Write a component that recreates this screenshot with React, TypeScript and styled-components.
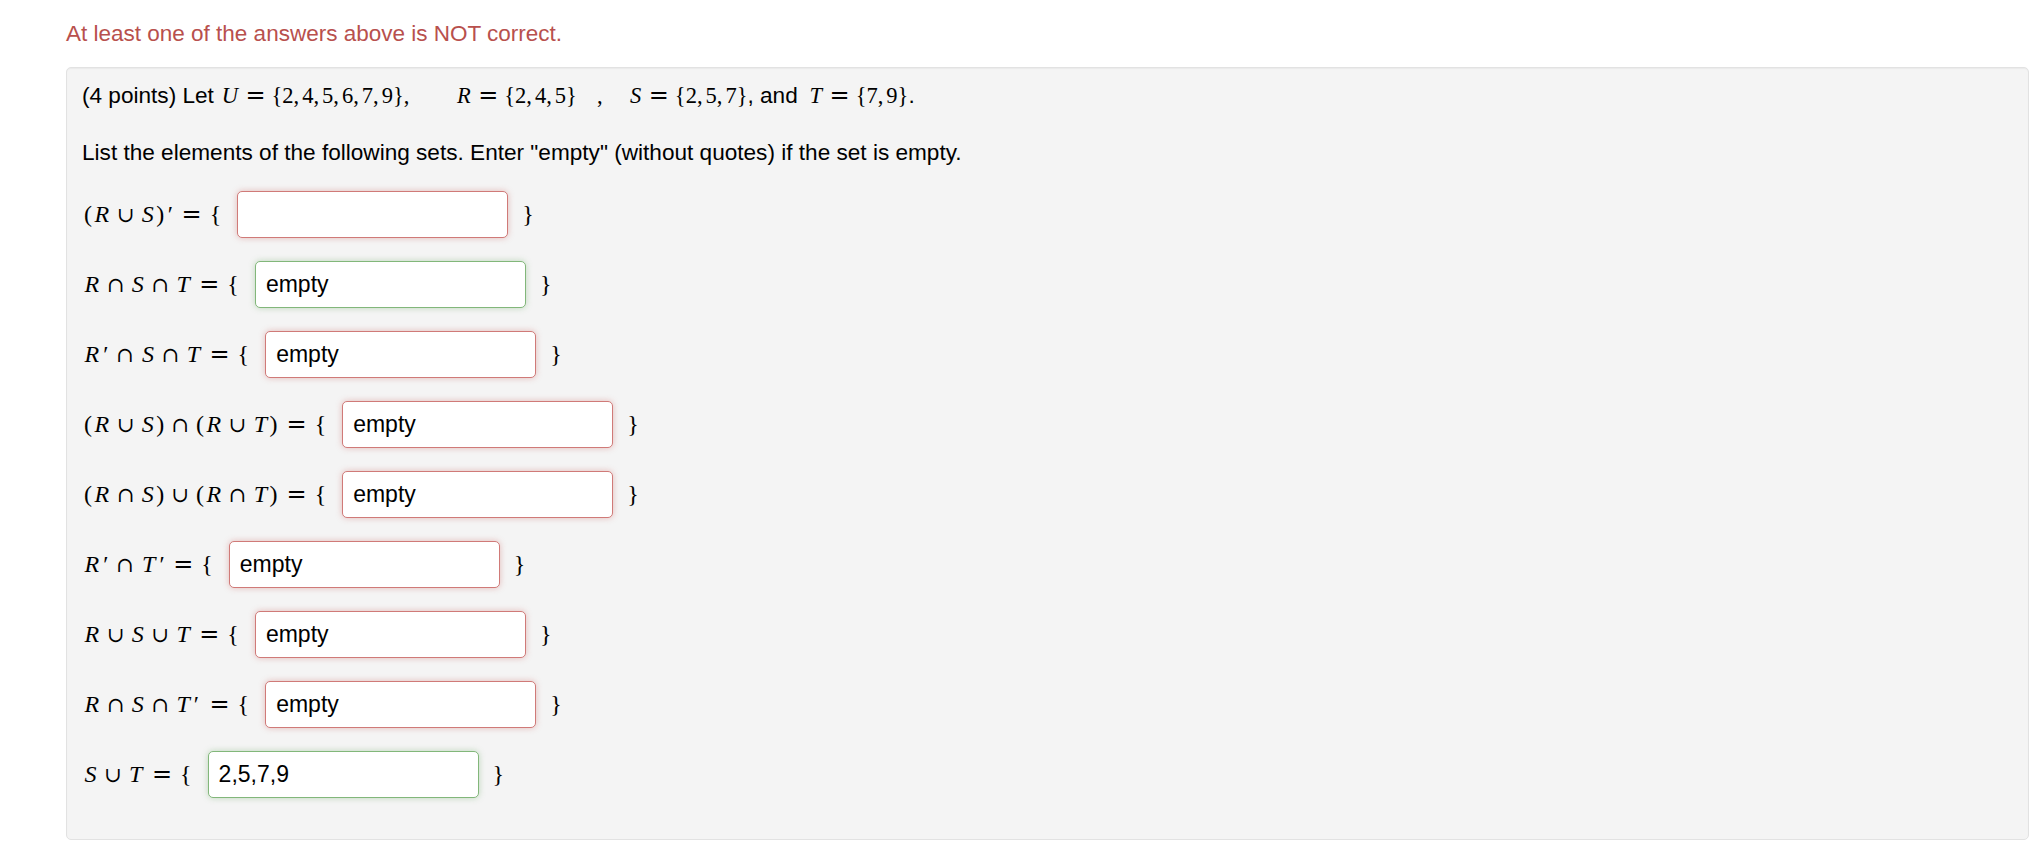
import React from "react";
import styled, { createGlobalStyle } from "styled-components";

const Global = createGlobalStyle`
  html, body { margin: 0; padding: 0; background: #ffffff; }
  body { font-family: "Liberation Sans", Arial, Helvetica, sans-serif; color: #000; }
`;

const Page = styled.div`
  padding: 15px 15px 0 66px;
  width: 2044px;
  box-sizing: border-box;
`;

const Warning = styled.div`
  font-size: 22.5px;
  line-height: 38px;
  color: #b8504d;
  margin-bottom: 14px;
`;

const Well = styled.div`
  box-sizing: border-box;
  width: 1963px;
  height: 773px;
  background: #f4f4f4;
  border: 1px solid #e2e2e2;
  border-radius: 5px;
  box-shadow: inset 0 1px 1px rgba(0, 0, 0, 0.04);
  padding: 7px 15px 0 15px;
  display: flex;
  flex-direction: column;
`;

const Para = styled.div<{ $mb: number }>`
  font-size: 22.6px;
  line-height: 40px;
  margin-bottom: ${(p) => p.$mb}px;
  display: flex;
  align-items: baseline;
  white-space: pre;
`;

const MathSpan = styled.span<{ $size?: number }>`
  font-family: "Liberation Serif", "DejaVu Serif", serif;
  font-size: ${(p) => p.$size ?? 24}px;
  white-space: pre;
`;

const V = styled.i`
  font-style: italic;
  font-family: "Liberation Serif", "DejaVu Serif", serif;
  padding: 0 1.5px;
`;

const Paren = styled.span`
  padding: 0 1px;
`;

const Op = styled.span<{ $m?: number }>`
  font-family: "DejaVu Serif", "Liberation Serif", serif;
  font-size: 21px;
  margin: 0 ${(p) => (p.$m ?? 6)}px;
`;

const Rel = styled.span<{ $m?: number }>`
  font-family: "DejaVu Sans", sans-serif;
  font-size: 24px;
  margin: 0 ${(p) => (p.$m ?? 8)}px;
`;

const Sep = styled.span`
  display: inline-block;
  margin-right: 3px;
`;

const Gap = styled.span<{ $w: number }>`
  display: inline-block;
  width: ${(p) => p.$w}px;
`;

const Prime = styled.span<{ $mr?: number }>`
  font-family: "Liberation Serif", "DejaVu Serif", serif;
  font-style: italic;
  font-size: 24px;
  margin: 0 ${(p) => p.$mr ?? 2}px 0 1px;
`;

const Rows = styled.div`
  display: flex;
  flex-direction: column;
  gap: 24px;
`;

const Row = styled.div`
  display: flex;
  align-items: center;
  height: 46px;
  padding-left: 1px;
`;

const Brace = styled.span<{ $l?: number; $r?: number }>`
  font-family: "Liberation Serif", "DejaVu Serif", serif;
  font-size: 24px;
  margin-left: ${(p) => p.$l ?? 0}px;
  margin-right: ${(p) => p.$r ?? 0}px;
`;

const Answer = styled.input<{ $ok: boolean }>`
  box-sizing: border-box;
  width: 271px;
  height: 47px;
  padding: 0 10px;
  border-radius: 5px;
  background: #fff;
  font-family: "Liberation Sans", Arial, Helvetica, sans-serif;
  font-size: 23px;
  color: #000;
  outline: none;
  border: 1px solid ${(p) => (p.$ok ? "#82b77a" : "#d07a78")};
  box-shadow: 0 0 6px ${(p) => (p.$ok ? "rgba(90, 160, 80, 0.35)" : "rgba(200, 80, 78, 0.35)")};
`;

type Item = { label: React.ReactNode; value: string; ok: boolean };

const U = (s: string) => <V>{s}</V>;
const cup = <Op>∪</Op>;
const cap = <Op>∩</Op>;
const pr = <Prime>′</Prime>;
const lp = <Paren>(</Paren>;
const rp = <Paren>)</Paren>;

function MathSet({ xs }: { xs: string[] }) {
  return (
    <>
      {"{"}
      {xs.map((x, i) => (
        <React.Fragment key={i}>
          {x}
          {i < xs.length - 1 && <Sep>,</Sep>}
        </React.Fragment>
      ))}
      {"}"}
    </>
  );
}

const items: Item[] = [
  { label: <>{lp}{U("R")}{cup}{U("S")}{rp}{pr}</>, value: "", ok: false },
  { label: <>{U("R")}{cap}{U("S")}{cap}{U("T")}</>, value: "empty", ok: true },
  { label: <>{U("R")}{pr}<Op $m={7}>∩</Op>{U("S")}{cap}{U("T")}</>, value: "empty", ok: false },
  { label: <>{lp}{U("R")}{cup}{U("S")}{rp}{cap}{lp}{U("R")}{cup}{U("T")}{rp}</>, value: "empty", ok: false },
  { label: <>{lp}{U("R")}{cap}{U("S")}{rp}{cup}{lp}{U("R")}{cap}{U("T")}{rp}</>, value: "empty", ok: false },
  { label: <>{U("R")}{pr}<Op $m={7}>∩</Op>{U("T")}{pr}</>, value: "empty", ok: false },
  { label: <>{U("R")}{cup}{U("S")}{cup}{U("T")}</>, value: "empty", ok: false },
  { label: <>{U("R")}{cap}{U("S")}{cap}{U("T")}<Prime $mr={4}>′</Prime></>, value: "empty", ok: false },
  { label: <>{U("S")}{cup}{U("T")}</>, value: "2,5,7,9", ok: true },
];

export default function App() {
  return (
    <>
      <Global />
      <Page>
        <Warning>At least one of the answers above is NOT correct.</Warning>
        <Well>
          <Para $mb={17}>
            (4 points) Let{" "}
            <MathSpan $size={22.5}>
              {U("U")}<Rel $m={6}>=</Rel><MathSet xs={["2", "4", "5", "6", "7", "9"]} />,
              <Gap $w={46} />
              {U("R")}<Rel $m={6}>=</Rel><MathSet xs={["2", "4", "5"]} />
              <Gap $w={20} />,<Gap $w={26} />
              {U("S")}<Rel $m={6}>=</Rel><MathSet xs={["2", "5", "7"]} />
            </MathSpan>
            , and <Gap $w={4} />
            <MathSpan $size={22.5}>
              {U("T")}<Rel $m={6}>=</Rel><MathSet xs={["7", "9"]} />
            </MathSpan>
            .
          </Para>
          <Para $mb={18}>
            List the elements of the following sets. Enter "empty" (without quotes) if the set is empty.
          </Para>
          <Rows>
            {items.map((it, i) => (
              <Row key={i}>
                <MathSpan>
                  {it.label}
                  <Rel>=</Rel>
                </MathSpan>
                <Brace $r={16}>{"{"}</Brace>
                <Answer $ok={it.ok} defaultValue={it.value} />
                <Brace $l={14}>{"}"}</Brace>
              </Row>
            ))}
          </Rows>
        </Well>
      </Page>
    </>
  );
}
